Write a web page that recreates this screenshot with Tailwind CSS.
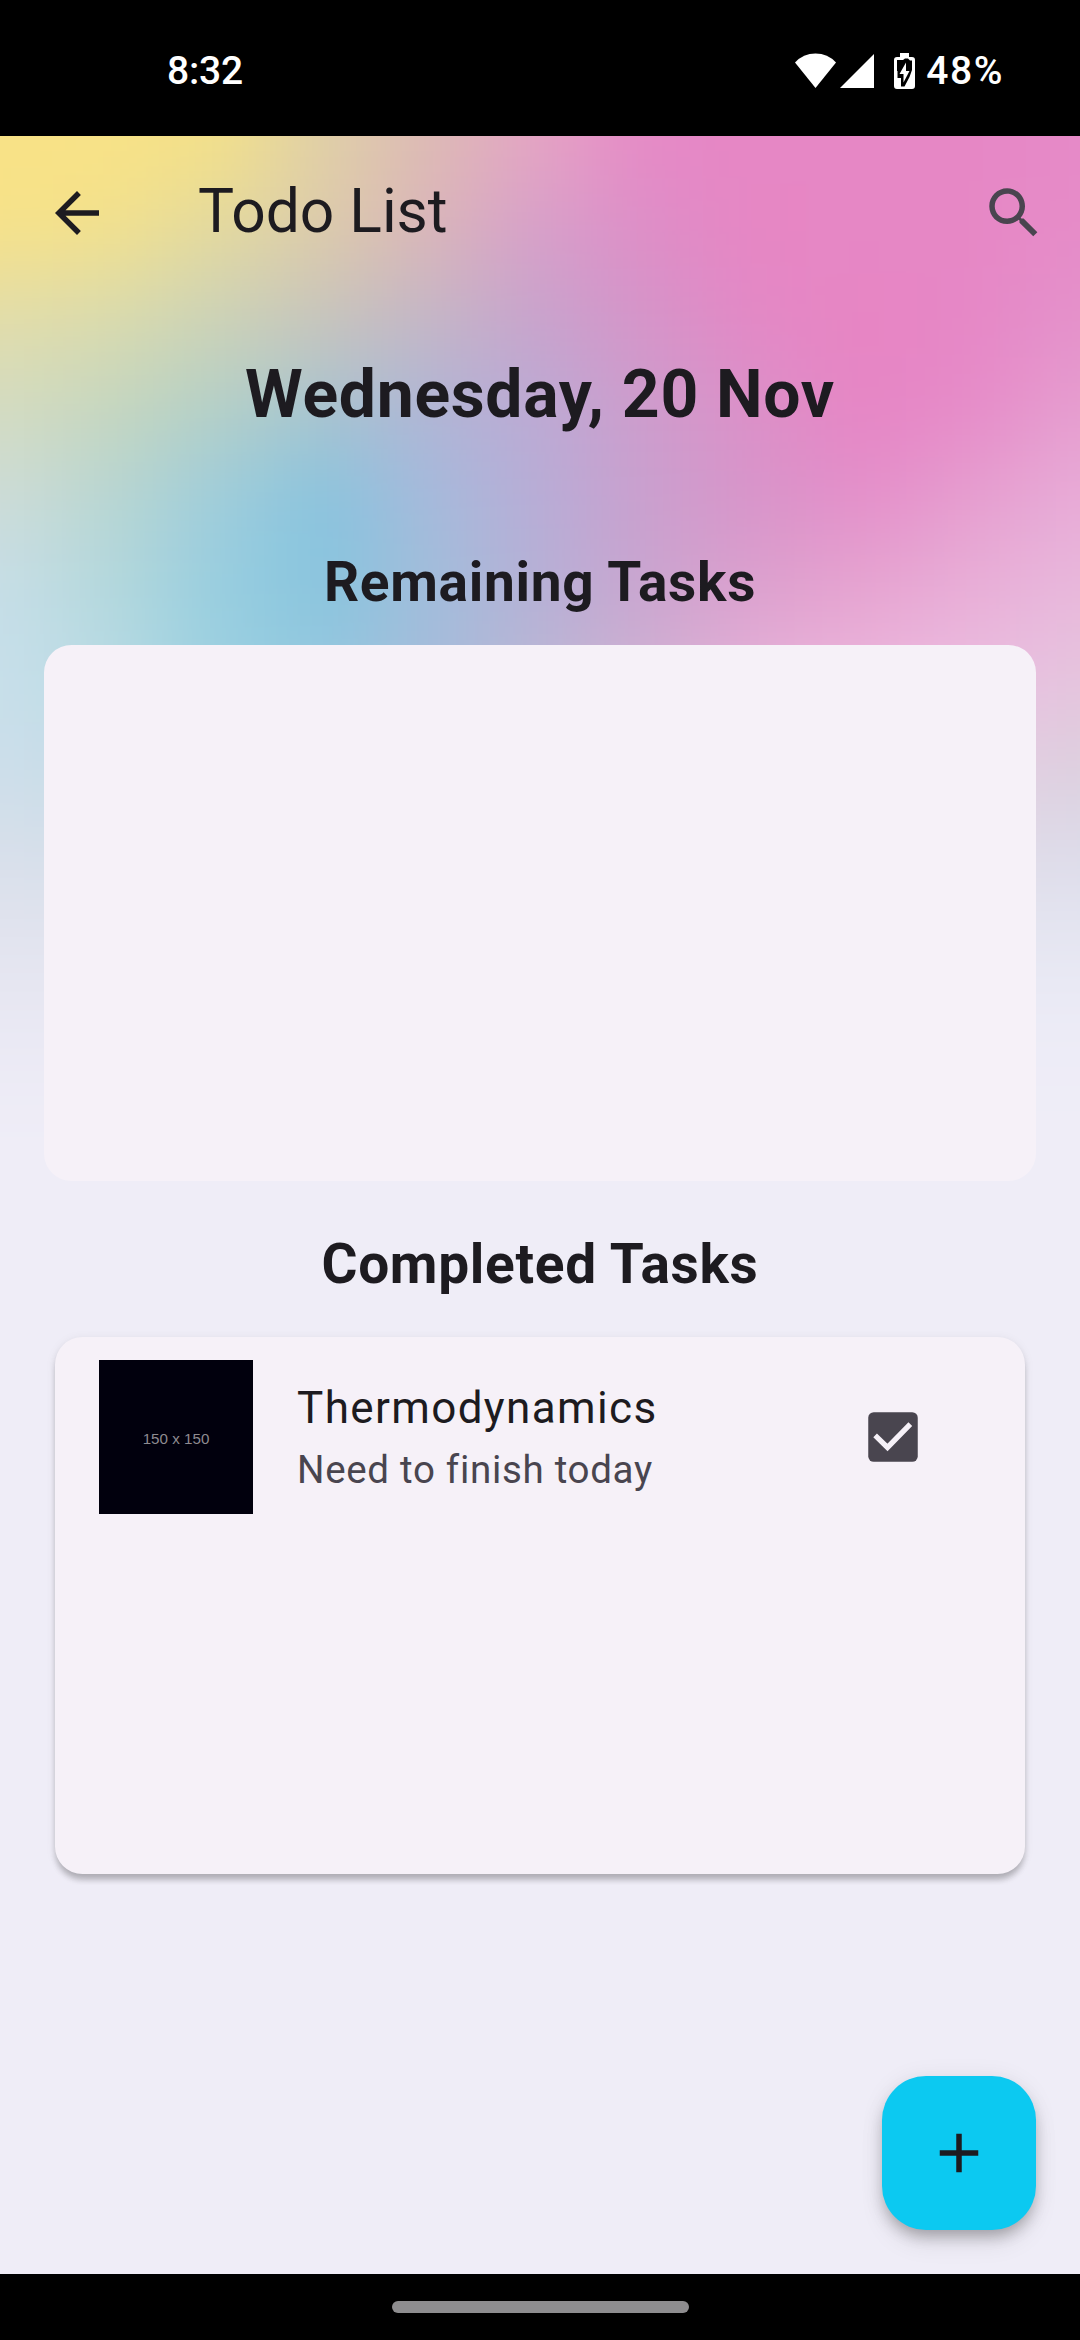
<!DOCTYPE html>
<html lang="en">
<head>
<meta charset="utf-8">
<title>Todo List</title>
<script src="https://cdn.jsdelivr.net/npm/@tailwindcss/browser@4"></script>
</head>
<body class="bg-black">
<div class="w-[1080px] h-[2340px] flex flex-col overflow-hidden bg-black font-['Roboto',sans-serif] text-[#1d1b20]">
  <!-- Status bar -->
  <header class="h-[136px] shrink-0 flex items-center justify-between pl-[167px] pr-[76px] pt-[6px] text-white font-medium text-[39px] leading-none">
    <span class="tracking-[-0.2px]">8:32</span>
    <div class="flex items-center">
      <svg class="w-[41px] h-[36px] mr-[4px]" viewBox="0 0 40 36" preserveAspectRatio="none" fill="#fff"><path d="M0 9.500Q8 .500 20 .500T40 9.500L20 35Z"/></svg>
      <svg class="w-[34px] h-[36px] mr-[20px]" viewBox="0 0 34 36" fill="#fff"><path d="M34 1V35H0Z"/></svg>
      <svg class="w-[21px] h-[36px] mr-[11px]" viewBox="0 0 21 36"><path d="M6 0H15V4H18Q21 4 21 7V33Q21 36 18 36H3Q0 36 0 33V7Q0 4 3 4H6Z" fill="#fff"/><path d="M3 7H9L11 5.500H14L16 7.500H18V17L15.500 24L10.500 33.500H7V25H3.500V18H3Z" fill="#000"/><path d="M12 9.500L5.500 21H9.500V29.500L15.500 18H12Z" fill="#fff"/></svg>
      <span class="tracking-[1.600px]">48%</span>
    </div>
  </header>

  <main class="relative h-[2138px] shrink-0 bg-[#efedf7] overflow-hidden">
    <!-- Gradient backdrop -->
    <svg id="backdrop" class="absolute inset-x-0 top-0 w-[1080px] h-[1100px]" viewBox="0 0 1080 1100">
      <defs><filter id="soft" filterUnits="userSpaceOnUse" x="-300" y="-300" width="1680" height="1800" color-interpolation-filters="sRGB"><feGaussianBlur stdDeviation="46"/></filter></defs>
      <g id="cells" filter="url(#soft)" shape-rendering="crispEdges"></g>
    </svg>

    <div class="relative h-full flex flex-col">
      <nav class="h-[154px] shrink-0 flex items-center px-[44px] pr-[33px]">
        <svg class="w-[66px] h-[66px]" viewBox="0 0 24 24" fill="#1d1b20"><path d="M20 11H7.830l5.590-5.590L12 4l-8 8 8 8 1.410-1.410L7.830 13H20v-2z"/></svg>
        <h1 class="ml-[88px] text-[60.500px] leading-none font-normal -translate-y-[1px]">Todo List</h1>
        <svg class="w-[66px] h-[66px] ml-auto" viewBox="0 0 24 24" fill="#49454f"><path d="M15.500 14h-.790l-.280-.270C15.410 12.590 16 11.110 16 9.500 16 5.910 13.090 3 9.500 3S3 5.910 3 9.500 5.910 16 9.500 16c1.610 0 3.090-.590 4.230-1.570l.270.280v.790l5 4.990L20.490 19l-4.990-5zm-6 0C7.010 14 5 11.990 5 9.500S7.010 5 9.500 5 14 7.010 14 9.500 11.990 14 9.500 14z"/></svg>
      </nav>
      <h2 class="mt-[59px] h-[92px] text-center text-[66px] leading-[92px] tracking-[0.690px] font-bold">Wednesday, 20 Nov</h2>
      <h3 class="mt-[101px] h-[80px] text-center text-[55px] leading-[80px] tracking-[0.690px] font-bold">Remaining Tasks</h3>
      <section class="mt-[23px] mx-[44px] h-[536px] shrink-0 rounded-[27.500px] bg-[#f6f1f8]"></section>
      <h3 class="mt-[43px] h-[80px] text-center text-[55px] leading-[80px] tracking-[0.690px] font-bold">Completed Tasks</h3>
      <div class="h-[556px] mt-[25px] shrink-0 mx-[44px] px-[11px] pt-[8px] overflow-hidden">
        <section class="h-[537px] rounded-[27.500px] bg-[#f6f1f8] shadow-[0_8px_6px_-2px_rgba(0,0,0,0.17),0_4px_6px_rgba(0,0,0,0.09),0_2px_11px_rgba(0,0,0,0.07)]">
          <div class="flex items-start pl-[44px] pt-[23px]">
            <div class="w-[154px] h-[154px] bg-[#01000d] flex items-center justify-center pt-[4px] font-['Liberation_Sans',sans-serif] text-[15.200px] text-[#8e8b90]">150 x 150</div>
            <div class="ml-[44px] mt-[18px] w-[460px]">
              <p class="text-[44px] leading-[60px] tracking-[1.375px]">Thermodynamics</p>
              <p class="mt-[1px] text-[38.500px] leading-[62px] tracking-[0.690px] text-[#49454f]">Need to finish today</p>
            </div>
            <svg class="w-[66px] h-[66px] ml-[103px] mt-[44px]" viewBox="0 0 24 24"><rect x="3" y="3" width="18" height="18" rx="2" fill="#49454f"/><path d="M5.500 11.400L10 15.800L18.300 7.300" fill="none" stroke="#f6f1f8" stroke-width="1.900"/></svg>
          </div>
        </section>
      </div>
      <button class="absolute right-[44px] bottom-[44px] w-[154px] h-[154px] rounded-[44px] bg-[#0cc9f1] flex items-center justify-center shadow-[0_9px_14px_-3px_rgba(0,0,0,0.24),0_14px_24px_rgba(0,0,0,0.08),0_2px_24px_rgba(0,0,0,0.07)]" aria-label="Add task">
        <svg class="w-[66px] h-[66px]" viewBox="0 0 24 24" fill="#1d1b20"><path d="M19 13h-6v6h-2v-6H5v-2h6V5h2v6h6z"/></svg>
      </button>
    </div>
  </main>

  <!-- Gesture bar -->
  <footer class="flex-1 flex justify-center pt-[27px]">
    <div class="w-[297px] h-[12px] rounded-full bg-[#8e8d8f]"></div>
  </footer>
</div>
<script>
  // Colour samples of the backdrop, 108px apart across and 90px apart down.
  const rows = [
    'f8e287 f8e287 f4e187 dfd0a8 dcbab5 e6a4c4 e688c6 e687c5 e687c5 e687c5 e68ac8',
    'f8e287 f4e18a e4da9e ddcbaa dbb4b9 d79fcb de8dc7 e786c4 e687c5 e687c5 e68cc8',
    'e2dcaa dadbae ccd2b8 c8c4bc c4b6c6 c8a2cc d693c8 e487c5 e785c4 e687c6 e491cb',
    'd4dcc0 c6d6be b4d0c6 a8c4d0 b0b4d6 bcaad4 ce9ccc dc90c8 e784c4 e68ac8 e69ecf',
    'cedcd8 b8d6d2 9eccdc 86c4df a6badc b8acd6 ca9fce d893c9 e48eca e69ecf e8acd8',
    'c6dee8 b4d8dc 98cedf 87c4de a2bedb b6b0d6 caa4cf dca0cd e6a4d0 e8aed7 e8b8dc',
    'c8dfea b8dbe4 9ad0e1 92c8df a4bada bab6d4 d0b0d2 e6b0d8 ecb4dc ecbce0 e6c4de',
    'ccdeea c4dce8 b8d8e6 b4d4e4 c0cce0 ccc8dc d8c6dc e4c8e0 e8cce2 e4cce0 dcd0de',
    'd8dfea d6dfea d0e0ec d0e0ec d4deec d8dcea dedaea e2daea e4dcea e0dce8 dcdcea',
    'e3e4ef e4e5f0 e5e7f2 e6e8f3 e6e8f3 e6e8f3 e6e8f3 e8e8f3 e8e8f3 e6e7f2 e6e7f2',
    'eae9f4 ebeaf5 ecebf6 ecebf6 ecebf6 ecebf6 ecebf6 ecebf6 ecebf6 ecebf6 edecf7',
    'efedf7 efedf7 efedf7 efedf7 efedf7 efedf7 efedf7 efedf7 efedf7 efedf7 efedf7'
  ].map(r => r.split(' '));
  const cells = document.getElementById('cells');
  rows.forEach((row, j) => row.forEach((c, i) => {
    const x0 = i === 0 ? -300 : i * 108 - 54, x1 = i === 10 ? 1380 : i * 108 + 54;
    const y0 = j === 0 ? -300 : j * 90 - 45, y1 = j === 11 ? 1500 : j * 90 + 45;
    const r = document.createElementNS('http://www.w3.org/2000/svg', 'rect');
    r.setAttribute('x', x0); r.setAttribute('y', y0);
    r.setAttribute('width', x1 - x0); r.setAttribute('height', y1 - y0);
    r.setAttribute('fill', '#' + c);
    cells.appendChild(r);
  }));
</script>
</body>
</html>
